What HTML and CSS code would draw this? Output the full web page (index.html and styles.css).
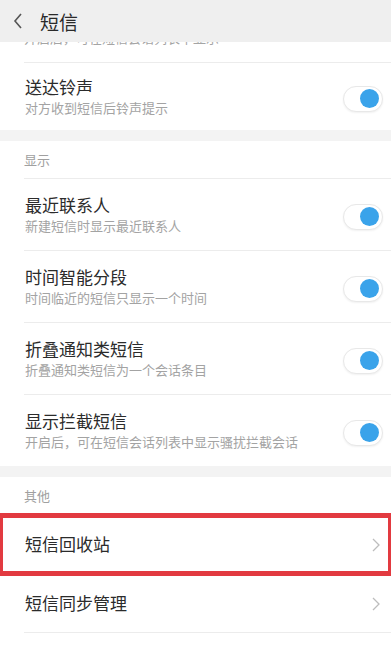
FILE: index.html
```html
<!DOCTYPE html>
<html lang="zh-CN">
<head>
    <meta charset="UTF-8">
    <meta name="viewport" content="width=device-width, initial-scale=1.0">
    <title>短信</title>
    <link rel="stylesheet" href="styles.css">
</head>
<body>
    <div class="topbar">
        <svg class="back" width="12" height="18" viewBox="0 0 12 18"><path d="M9 2 L3 9 L9 16" fill="none" stroke="#555" stroke-width="1.6"/></svg>
        <span class="topbar_title">短信</span>
    </div>

    <div class="group">
        <div class="peek"><span>开启后，可在短信会话列表中显示</span></div>
        <div class="item item-first">
            <div class="item_text">
                <div class="item_title">送达铃声</div>
                <div class="item_sub">对方收到短信后铃声提示</div>
            </div>
            <div class="switch"><span class="switch_knob"></span></div>
        </div>
    </div>

    <div class="group">
        <div class="group_head">显示</div>
        <div class="item">
            <div class="item_text">
                <div class="item_title">最近联系人</div>
                <div class="item_sub">新建短信时显示最近联系人</div>
            </div>
            <div class="switch"><span class="switch_knob"></span></div>
        </div>
        <div class="item">
            <div class="item_text">
                <div class="item_title">时间智能分段</div>
                <div class="item_sub">时间临近的短信只显示一个时间</div>
            </div>
            <div class="switch"><span class="switch_knob"></span></div>
        </div>
        <div class="item">
            <div class="item_text">
                <div class="item_title">折叠通知类短信</div>
                <div class="item_sub">折叠通知类短信为一个会话条目</div>
            </div>
            <div class="switch"><span class="switch_knob"></span></div>
        </div>
        <div class="item">
            <div class="item_text">
                <div class="item_title">显示拦截短信</div>
                <div class="item_sub">开启后，可在短信会话列表中显示骚扰拦截会话</div>
            </div>
            <div class="switch"><span class="switch_knob"></span></div>
        </div>
    </div>

    <div class="group group-last">
        <div class="group_head">其他</div>
        <div class="item item-link is-marked">
            <div class="item_title">短信回收站</div>
            <svg class="arrow" width="10" height="16" viewBox="0 0 10 16"><path d="M2 2 L8 8 L2 14" fill="none" stroke="#bdbdbd" stroke-width="1.3"/></svg>
        </div>
        <div class="item item-link">
            <div class="item_title">短信同步管理</div>
            <svg class="arrow" width="10" height="16" viewBox="0 0 10 16"><path d="M2 2 L8 8 L2 14" fill="none" stroke="#bdbdbd" stroke-width="1.3"/></svg>
        </div>
    </div>
</body>
</html>
```

FILE: styles.css
```css
body {
    margin: 0;
    background: #f3f3f3;
    font-family: "Noto Sans CJK SC", "Noto Sans", sans-serif;
    color: #2b2b2b;
    overflow: hidden;
}

.topbar {
    height: 42px;
    display: flex;
    align-items: center;
    background: #efefef;
    padding-left: 12px;
}

.back {
    margin-right: 16px;
}

.topbar_title {
    font-size: 19px;
    color: #2a2a2a;
}

.group {
    background: #fff;
    padding-left: 24px;
    margin-bottom: 11px;
}

.group-last {
    margin-bottom: 0;
    padding-bottom: 40px;
}

/* row scrolled up under the title bar, only its last pixels show */
.peek {
    height: 20px;
    overflow: hidden;
    border-bottom: 1px solid #ececec;
}

.peek span {
    display: block;
    margin-top: -13px;
    font-size: 13px;
    line-height: 18px;
    color: #a5a5a5;
}

.group_head {
    height: 37px;
    line-height: 37px;
    font-size: 13px;
    color: #a0a0a0;
    border-bottom: 1px solid #ececec;
}

.item {
    height: 71px;
    display: flex;
    align-items: center;
    padding: 0 8px 0 1px;
    border-bottom: 1px solid #ececec;
}

.item-first {
    height: 67px;
}

.group .item:last-child {
    border-bottom: none;
}

.item_text {
    flex: 1;
}

.item_title {
    flex: 1;
    font-size: 17px;
    line-height: 22px;
}

.item_sub {
    font-size: 13px;
    line-height: 18px;
    color: #a3a3a3;
    margin-top: 1px;
}

.switch {
    width: 40px;
    height: 26px;
    box-sizing: border-box;
    border: 1px solid #e8e8e8;
    border-radius: 14px;
    background: #fff;
    box-shadow: 0 1px 2px rgba(0, 0, 0, 0.06);
    display: flex;
    align-items: center;
    justify-content: flex-end;
    padding-right: 3px;
    margin-top: 4px;
}

.switch_knob {
    width: 19px;
    height: 19px;
    border-radius: 50%;
    background: #3aa3ea;
}

.item-link {
    height: 58px;
    padding-right: 10px;
}

.group .item-link:last-child {
    border-bottom: 1px solid #ececec;
}

.is-marked {
    margin-left: -24px;
    padding-left: 25px;
    outline: 5px solid #e23a40;
    outline-offset: -3px;
    position: relative;
}

.arrow {
    margin-top: 2px;
}
```
